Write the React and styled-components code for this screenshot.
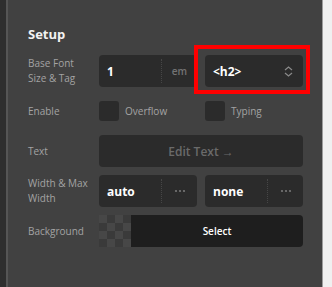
import React from "react";
import styled, { createGlobalStyle } from "styled-components";

const Global = createGlobalStyle`
  html, body { margin: 0; padding: 0; background: #f0f0f0; }
  body { font-family: "Open Sans", "Noto Sans", sans-serif; }
`;

const Frame = styled.div`
  display: flex;
  height: 287px;
  width: 332px;
  overflow: hidden;
`;

const LeftStrip = styled.div`
  width: 6px;
  background: #2e2e2e;
  border-right: 2px solid #555555;
`;

const Panel = styled.div`
  flex: 1;
  background: #414141;
  padding: 25px 19px 0 20px;
  border-right: 1px solid #9c9c9c;
`;

const RightArea = styled.div`
  width: 9px;
  background: #f0f0f0;
`;

const Heading = styled.h3`
  margin: 0 0 12px 0;
  font-size: 13px;
  line-height: 18px;
  font-weight: 700;
  color: #f2f2f2;
`;

const Rows = styled.div`
  display: grid;
  grid-template-columns: 71px 1fr;
  grid-auto-rows: 32px;
  row-gap: 8px;
  align-items: center;
`;

const Label = styled.div`
  font-size: 10px;
  line-height: 15px;
  color: #a3a3a3;
`;

const Pair = styled.div`
  display: grid;
  grid-template-columns: 1fr 1fr;
  column-gap: 8px;
  height: 32px;
  position: relative;
`;

const Box = styled.div`
  display: flex;
  align-items: center;
  height: 32px;
  background: #2b2b2b;
  border-radius: 4px;
  box-sizing: border-box;
`;

const Value = styled.div`
  flex: 0 0 62px;
  box-sizing: border-box;
  padding-left: 8px;
  font-size: 12px;
  font-weight: 700;
  color: #ffffff;
`;

const Unit = styled.div`
  flex: 1;
  align-self: stretch;
  margin: 4px 0;
  display: flex;
  align-items: center;
  justify-content: center;
  border-left: 1px dotted #464646;
  font-size: 10px;
  font-weight: 600;
  color: #737373;
`;

const SelectBox = styled(Box)`
  justify-content: space-between;
  padding: 0 10px 0 8px;
  font-size: 12px;
  font-weight: 700;
  color: #ffffff;
`;

const Highlight = styled.div`
  position: absolute;
  left: 95px;
  top: -10px;
  width: 116px;
  height: 49px;
  box-sizing: border-box;
  border: 4px solid #ff0000;
  pointer-events: none;
`;

const Checks = styled.div`
  display: grid;
  grid-template-columns: 1fr 1fr;
  column-gap: 8px;
`;

const Check = styled.label`
  display: flex;
  align-items: center;
  gap: 6px;
  font-size: 10px;
  color: #a3a3a3;
`;

const CheckSquare = styled.span`
  width: 20px;
  height: 20px;
  border-radius: 3px;
  background: #2b2b2b;
`;

const WideButton = styled.div`
  height: 32px;
  display: flex;
  align-items: center;
  justify-content: center;
  background: #2b2b2b;
  border-radius: 4px;
  font-size: 12px;
  font-weight: 600;
  color: #6a6a6a;
`;

const BgRow = styled.div`
  display: flex;
  height: 32px;
`;

const Checker = styled.div`
  width: 32px;
  height: 32px;
  background-color: #474747;
  background-image:
    linear-gradient(45deg, #3a3a3a 25%, transparent 25%, transparent 75%, #3a3a3a 75%),
    linear-gradient(45deg, #3a3a3a 25%, transparent 25%, transparent 75%, #3a3a3a 75%);
  background-size: 16px 16px;
  background-position: 0 0, 8px 8px;
`;

const SelectBtn = styled.div`
  flex: 1;
  display: flex;
  align-items: center;
  justify-content: center;
  background: #1e1e1e;
  border-radius: 0 4px 4px 0;
  font-size: 10px;
  font-weight: 600;
  color: #ffffff;
`;

const Dots = () => (
  <svg width="12" height="4" viewBox="0 0 12 4">
    <circle cx="2" cy="2" r="1.1" fill="#777" />
    <circle cx="6" cy="2" r="1.1" fill="#777" />
    <circle cx="10" cy="2" r="1.1" fill="#777" />
  </svg>
);

const UpDown = () => (
  <svg width="9" height="11" viewBox="0 0 9 11" fill="none" stroke="#8a8a8a" strokeWidth="1.2">
    <path d="M1 4 L4.5 1 L8 4" />
    <path d="M1 7 L4.5 10 L8 7" />
  </svg>
);

export default function App() {
  return (
    <>
      <Global />
      <Frame>
        <LeftStrip />
        <Panel>
          <Heading>Setup</Heading>
          <Rows>
            <Label>Base Font<br />Size &amp; Tag</Label>
            <Pair>
              <Box>
                <Value>1</Value>
                <Unit>em</Unit>
              </Box>
              <SelectBox>
                <span>&lt;h2&gt;</span>
                <UpDown />
              </SelectBox>
              <Highlight />
            </Pair>

            <Label>Enable</Label>
            <Checks>
              <Check><CheckSquare />Overflow</Check>
              <Check><CheckSquare />Typing</Check>
            </Checks>

            <Label>Text</Label>
            <WideButton>Edit Text →</WideButton>

            <Label>Width &amp; Max<br />Width</Label>
            <Pair>
              <Box>
                <Value>auto</Value>
                <Unit><Dots /></Unit>
              </Box>
              <Box>
                <Value>none</Value>
                <Unit><Dots /></Unit>
              </Box>
            </Pair>

            <Label>Background</Label>
            <BgRow>
              <Checker />
              <SelectBtn>Select</SelectBtn>
            </BgRow>
          </Rows>
        </Panel>
        <RightArea />
      </Frame>
    </>
  );
}
